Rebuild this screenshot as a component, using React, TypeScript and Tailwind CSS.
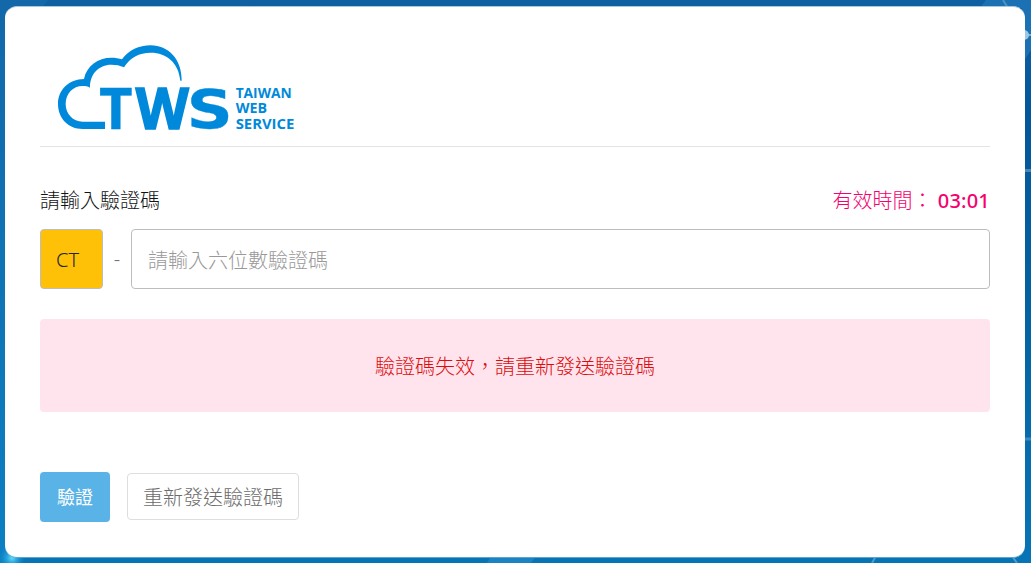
import { useState } from 'react';

const BRAND = '#0089db';

function Backdrop() {
  return (
    <svg
      className="absolute inset-0 h-full w-full"
      viewBox="0 0 1031 563"
      preserveAspectRatio="none"
      aria-hidden="true"
    >
      <defs>
        <linearGradient id="sky" x1="0" y1="0" x2="0" y2="1">
          <stop offset="0" stopColor="#0f60a3" />
          <stop offset="0.2" stopColor="#04569a" />
          <stop offset="0.5" stopColor="#03609f" />
          <stop offset="1" stopColor="#0774b6" />
        </linearGradient>
        <linearGradient id="left" x1="0" y1="0" x2="0" y2="1">
          <stop offset="0" stopColor="#1268a9" />
          <stop offset="1" stopColor="#0b80c3" />
        </linearGradient>
        <radialGradient id="glow">
          <stop offset="0" stopColor="#5fdcf5" />
          <stop offset="0.35" stopColor="#2ba6df" />
          <stop offset="1" stopColor="#0b80c3" stopOpacity="0" />
        </radialGradient>
      </defs>
      <rect width="1031" height="563" fill="url(#sky)" />
      <rect width="8" height="563" fill="url(#left)" />
      <path d="M0 0H48L42 8H0Z" fill="#1268a9" />
      <path d="M986 0H1031V50L1022 64V8H980Z" fill="#1b71b3" />
      <path d="M1003 0L1008 8" stroke="#4f91c3" strokeWidth="2" />
      <path d="M1025 35H1031" stroke="#79b0d8" strokeWidth="2" />
      <circle cx="1024" cy="35" r="5" fill="#9fc7e4" />
      <path d="M1025 170.500H1031" stroke="#4d86b5" strokeWidth="3" />
      <path d="M1025 439H1031" stroke="#3b8ac2" strokeWidth="3" />
      <path d="M491 556H536L531 563H487Z" fill="#1b83c2" />
      <path d="M876 556L872 563M1012 556L1017 563" stroke="#4d9bce" strokeWidth="2" />
      <circle cx="12" cy="558" r="14" fill="url(#glow)" />
    </svg>
  );
}

function Logo() {
  return (
    <svg
      className="ml-[17px] block h-[88px] w-[240px] overflow-visible"
      viewBox="51 39 720 264"
      fill={BRAND}
      role="img"
      aria-label="TWS"
    >
      <path d="M195 297H128C84 297 54 264 54 222C54 179 86 148 132 147C140 107 174 83 214 83C226 83 237 85 246 88C266 60 297 46 332 46C385 46 426 88 425 152H421C416 99 381 68 332 68C297 68 270 83 252 112C240 106 228 104 214 104C176 104 149 133 150 173C143 169 136 168 128 168C99 168 77 191 77 222C77 252 99 275 128 275H195Z" />
      <g
        fontFamily='"Open Sans", "Noto Sans", sans-serif'
        fontWeight="700"
        fontSize="170"
        stroke={BRAND}
        strokeWidth="1"
      >
        <text x="177" y="297" textLength="101" lengthAdjust="spacingAndGlyphs">T</text>
        <text x="287" y="297" textLength="159" lengthAdjust="spacingAndGlyphs" strokeWidth="5">W</text>
        <text
          x="440"
          y="295"
          textLength="138"
          lengthAdjust="spacingAndGlyphs"
          fontFamily='"DejaVu Sans", sans-serif'
          fontSize="162"
        >
          S
        </text>
      </g>
      <g fontFamily='"Open Sans", "Noto Sans", sans-serif' fontWeight="700" fontSize="41">
        <text x="587" y="203" textLength="168" lengthAdjust="spacingAndGlyphs">TAIWAN</text>
        <text x="587" y="250" textLength="94" lengthAdjust="spacingAndGlyphs">WEB</text>
        <text x="587" y="297" textLength="176" lengthAdjust="spacingAndGlyphs">SERVICE</text>
      </g>
    </svg>
  );
}

export default function App() {
  const [code, setCode] = useState('');

  return (
    <main className="relative h-[563px] w-[1031px] overflow-hidden px-[5px] pt-[6px] font-['Noto_Sans','Noto_Sans_CJK_TC',sans-serif] text-xl font-light">
      <Backdrop />
      <section className="relative mr-px h-[552px] rounded-xl border-t border-b border-t-[#a9c7df] border-b-[#5ca5d1] bg-white px-[35px] pt-[36px]">
        <header className="h-[104px] border-b border-[#e4e4e4]">
          <Logo />
        </header>

        <div className="mt-[38px] flex h-8 items-center justify-between leading-8">
          <label htmlFor="code" className="text-[#101214]">請輸入驗證碼</label>
          <p className="text-[#f5006e]">
            有效時間： <span className="font-medium tracking-[0.2px]">03:01</span>
          </p>
        </div>

        <div className="mt-3 flex h-[60px] items-center">
          <span className="flex h-full w-[63px] items-center rounded border border-[#bdbdbd] bg-[#ffc107] pt-px pl-[15px] text-[#212529]">
            CT
          </span>
          <span className="w-7 text-center text-[#757575]">-</span>
          <input
            id="code"
            value={code}
            onChange={(e) => setCode(e.target.value)}
            placeholder="請輸入六位數驗證碼"
            maxLength={6}
            className="h-full flex-1 rounded border border-[#bdbdbd] px-4 pt-0.5 outline-none placeholder:text-[#999]"
          />
        </div>

        <div className="mt-[30px] flex h-[93px] items-center justify-center rounded bg-[#ffe4ee] pt-0.5 text-[#dc0c0c]">
          驗證碼失效，請重新發送驗證碼
        </div>

        <div className="mt-[60px] flex h-[50px] items-start gap-[17px]">
          <button className="h-[50px] w-[70px] rounded bg-[#59b3e6] text-lg font-normal text-white">
            驗證
          </button>
          <button className="mt-px h-[47px] w-[172px] rounded border border-[#dedede] pt-0.5 text-[#6c6c6c]">
            重新發送驗證碼
          </button>
        </div>
      </section>
    </main>
  );
}
